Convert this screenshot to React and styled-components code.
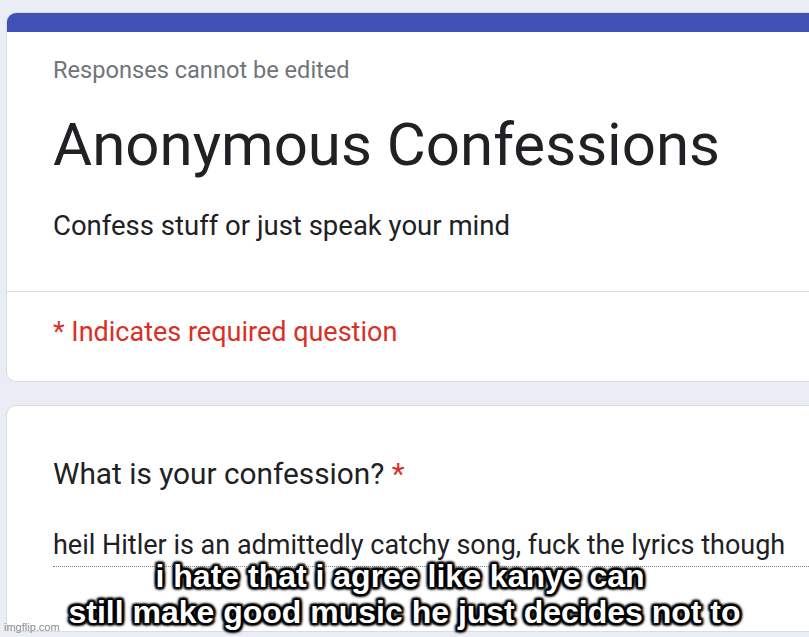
import React from 'react';
import styled, { createGlobalStyle } from 'styled-components';

const GlobalStyle = createGlobalStyle`
  html, body {
    margin: 0;
    padding: 0;
    background: #eaecf6;
    overflow: hidden;
  }
  body {
    font-family: Roboto, "Liberation Sans", Arial, sans-serif;
  }
`;

const Page = styled.div`
  position: relative;
  width: 809px;
  height: 637px;
  padding: 12px 0 0 6px;
  box-sizing: border-box;
  display: flex;
  flex-direction: column;
  gap: 23px;
  overflow: hidden;
`;

const Card = styled.div`
  width: 860px;
  background: #fff;
  border: 1px solid #dadce0;
  border-radius: 10px;
  overflow: hidden;
  flex-shrink: 0;
`;

const Accent = styled.div`
  height: 19px;
  background: #3f51b4;
`;

const Section = styled.div`
  padding: ${p => p.$pad};
`;

const Note = styled.div`
  font-size: 23.6px;
  line-height: 28px;
  color: #70757a;
`;

const Title = styled.h1`
  margin: 26px 0 0;
  font-weight: 400;
  font-size: 60px;
  line-height: 70px;
  color: #202124;
`;

const Subtitle = styled.div`
  margin-top: 30px;
  font-size: 27.5px;
  line-height: 32px;
  color: #202124;
`;

const Divider = styled.div`
  height: 1px;
  background: #dadce0;
`;

const Required = styled.div`
  font-size: 27px;
  line-height: 32px;
  color: #d93025;
`;

const Question = styled.div`
  font-size: 29.8px;
  line-height: 36px;
  color: #202124;
`;

const Star = styled.span`
  color: #d93025;
`;

const Answer = styled.div`
  margin-top: 37px;
  font-size: 27px;
  line-height: 32px;
  color: #202124;
  padding-bottom: 5px;
  border-bottom: 1px dotted #8a8a8a;
`;

const Caption = styled.div`
  position: absolute;
  left: 0;
  right: 0;
  top: 558px;
  text-align: center;
  font-family: "Liberation Sans", Arial, sans-serif;
  font-weight: 700;
  font-size: 32px;
  line-height: 36px;
  color: #fff;
  text-shadow:
    0 0 2px #000, 0 0 3px #000, 0 0 4px #000, 0 0 5px #000,
    2px 2px 2px #000, -2px -2px 2px #000, 2px -2px 2px #000, -2px 2px 2px #000,
    0 2px 3px #000, 0 -2px 3px #000, 2px 0 3px #000, -2px 0 3px #000;
`;

const Watermark = styled.div`
  position: absolute;
  left: 4px;
  bottom: 4px;
  font-family: "Liberation Sans", Arial, sans-serif;
  font-size: 11px;
  color: #8e8e8e;
`;

export default function App() {
  return (
    <>
      <GlobalStyle />
      <Page>
        <Card>
          <Accent />
          <Section $pad="24px 0 49px 46px">
            <Note>Responses cannot be edited</Note>
            <Title>Anonymous Confessions</Title>
            <Subtitle>Confess stuff or just speak your mind</Subtitle>
          </Section>
          <Divider />
          <Section $pad="24px 0 33px 46px">
            <Required>* Indicates required question</Required>
          </Section>
        </Card>
        <Card>
          <Section $pad="50px 0 64px 46px">
            <Question>
              What is your confession? <Star>*</Star>
            </Question>
            <Answer>
              heil Hitler is an admittedly catchy song, fuck the lyrics though
            </Answer>
          </Section>
        </Card>
        <Caption>
          i hate that i agree like kanye can{'\u00a0'}
          <br />
          still make good music he just decides not to
        </Caption>
        <Watermark>imgflip.com</Watermark>
      </Page>
    </>
  );
}
